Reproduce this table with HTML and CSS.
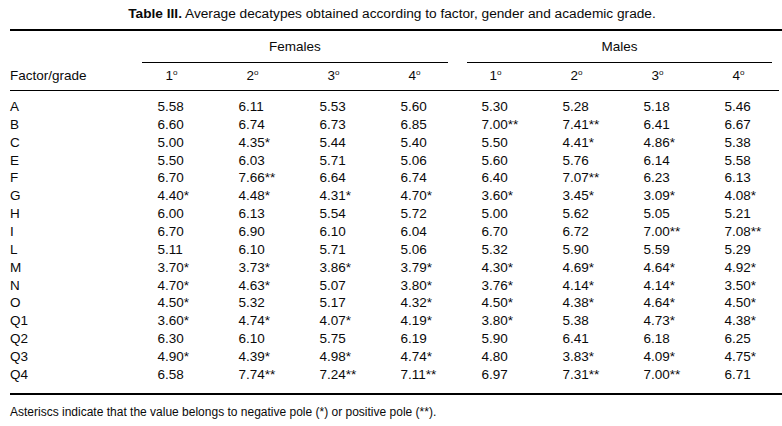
FILE: index.html
```html
<!DOCTYPE html>
<html>
<head>
<meta charset="utf-8">
<link rel="stylesheet" href="styles.css">
</head>
<body>
<div class="page">
  <div class="title"><b>Table III.</b> Average decatypes obtained according to factor, gender and academic grade.</div>
  <div class="table">
    <div class="grp-empty"></div>
    <div class="grp grp-f"><span>Females</span></div>
    <div class="grp grp-m"><span>Males</span></div>

    <div class="hd hd-label">Factor/grade</div>
    <div class="hd">1<span class="ord">o</span></div>
    <div class="hd">2<span class="ord">o</span></div>
    <div class="hd">3<span class="ord">o</span></div>
    <div class="hd">4<span class="ord">o</span></div>
    <div class="hd">1<span class="ord">o</span></div>
    <div class="hd">2<span class="ord">o</span></div>
    <div class="hd">3<span class="ord">o</span></div>
    <div class="hd">4<span class="ord">o</span></div>

    <div class="body">
      <div class="row"><div class="lab">A</div><div>5.58</div><div>6.11</div><div>5.53</div><div>5.60</div><div>5.30</div><div>5.28</div><div>5.18</div><div>5.46</div></div>
      <div class="row"><div class="lab">B</div><div>6.60</div><div>6.74</div><div>6.73</div><div>6.85</div><div>7.00**</div><div>7.41**</div><div>6.41</div><div>6.67</div></div>
      <div class="row"><div class="lab">C</div><div>5.00</div><div>4.35*</div><div>5.44</div><div>5.40</div><div>5.50</div><div>4.41*</div><div>4.86*</div><div>5.38</div></div>
      <div class="row"><div class="lab">E</div><div>5.50</div><div>6.03</div><div>5.71</div><div>5.06</div><div>5.60</div><div>5.76</div><div>6.14</div><div>5.58</div></div>
      <div class="row"><div class="lab">F</div><div>6.70</div><div>7.66**</div><div>6.64</div><div>6.74</div><div>6.40</div><div>7.07**</div><div>6.23</div><div>6.13</div></div>
      <div class="row"><div class="lab">G</div><div>4.40*</div><div>4.48*</div><div>4.31*</div><div>4.70*</div><div>3.60*</div><div>3.45*</div><div>3.09*</div><div>4.08*</div></div>
      <div class="row"><div class="lab">H</div><div>6.00</div><div>6.13</div><div>5.54</div><div>5.72</div><div>5.00</div><div>5.62</div><div>5.05</div><div>5.21</div></div>
      <div class="row"><div class="lab">I</div><div>6.70</div><div>6.90</div><div>6.10</div><div>6.04</div><div>6.70</div><div>6.72</div><div>7.00**</div><div>7.08**</div></div>
      <div class="row"><div class="lab">L</div><div>5.11</div><div>6.10</div><div>5.71</div><div>5.06</div><div>5.32</div><div>5.90</div><div>5.59</div><div>5.29</div></div>
      <div class="row"><div class="lab">M</div><div>3.70*</div><div>3.73*</div><div>3.86*</div><div>3.79*</div><div>4.30*</div><div>4.69*</div><div>4.64*</div><div>4.92*</div></div>
      <div class="row"><div class="lab">N</div><div>4.70*</div><div>4.63*</div><div>5.07</div><div>3.80*</div><div>3.76*</div><div>4.14*</div><div>4.14*</div><div>3.50*</div></div>
      <div class="row"><div class="lab">O</div><div>4.50*</div><div>5.32</div><div>5.17</div><div>4.32*</div><div>4.50*</div><div>4.38*</div><div>4.64*</div><div>4.50*</div></div>
      <div class="row"><div class="lab">Q1</div><div>3.60*</div><div>4.74*</div><div>4.07*</div><div>4.19*</div><div>3.80*</div><div>5.38</div><div>4.73*</div><div>4.38*</div></div>
      <div class="row"><div class="lab">Q2</div><div>6.30</div><div>6.10</div><div>5.75</div><div>6.19</div><div>5.90</div><div>6.41</div><div>6.18</div><div>6.25</div></div>
      <div class="row"><div class="lab">Q3</div><div>4.90*</div><div>4.39*</div><div>4.98*</div><div>4.74*</div><div>4.80</div><div>3.83*</div><div>4.09*</div><div>4.75*</div></div>
      <div class="row"><div class="lab">Q4</div><div>6.58</div><div>7.74**</div><div>7.24**</div><div>7.11**</div><div>6.97</div><div>7.31**</div><div>7.00**</div><div>6.71</div></div>
    </div>
  </div>
  <div class="note">Asteriscs indicate that the value belongs to negative pole (*) or positive pole (**).</div>
</div>
</body>
</html>
```

FILE: styles.css
```css
html, body {
  margin: 0;
  padding: 0;
  background: #fff;
}

body {
  font-family: "Liberation Sans", Arial, Helvetica, sans-serif;
  color: #0a0a0a;
  font-size: 13.5px;
}

.page {
  width: 782px;
  padding-left: 10px;
  box-sizing: border-box;
}

.title {
  height: 29px;
  line-height: 28px;
  text-align: center;
  font-size: 13.7px;
  margin-left: -8px;
}

.table {
  display: grid;
  grid-template-columns: 121px repeat(8, 81px);
  width: 772px;
  border-top: 2px solid #000;
  border-bottom: 2px solid #000;
}

.grp-empty {
  grid-column: 1;
}

.grp {
  padding-top: 7px;
  line-height: 17px;
  text-align: center;
  height: 31px;
  box-sizing: border-box;
}

.grp span {
  display: block;
  border-bottom: 1px solid #000;
  padding-bottom: 7px;
}

.grp-f {
  grid-column: 2 / span 4;
  padding-left: 11px;
  padding-right: 7px;
}

.grp-m {
  grid-column: 6 / span 4;
  padding-left: 12px;
  padding-right: 7px;
}

.hd {
  line-height: 16px;
  padding: 6px 0 6px;
  text-align: center;
  border-bottom: 1px solid #000;
  box-sizing: border-box;
  height: 29px;
}

.hd-label {
  text-align: left;
}

.ord {
  font-size: 0.6em;
  position: relative;
  top: -0.6em;
}

.body {
  grid-column: 1 / -1;
  display: grid;
  grid-template-columns: subgrid;
  padding: 7px 0 9px;
}

.row {
  grid-column: 1 / -1;
  display: grid;
  grid-template-columns: subgrid;
  height: 17.87px;
  line-height: 17.87px;
}

.row > div {
  padding-left: 26.5px;
  white-space: nowrap;
}

.row > .lab {
  padding-left: 0;
}

.note {
  font-size: 12px;
  line-height: 16px;
  padding-top: 9px;
}
```
